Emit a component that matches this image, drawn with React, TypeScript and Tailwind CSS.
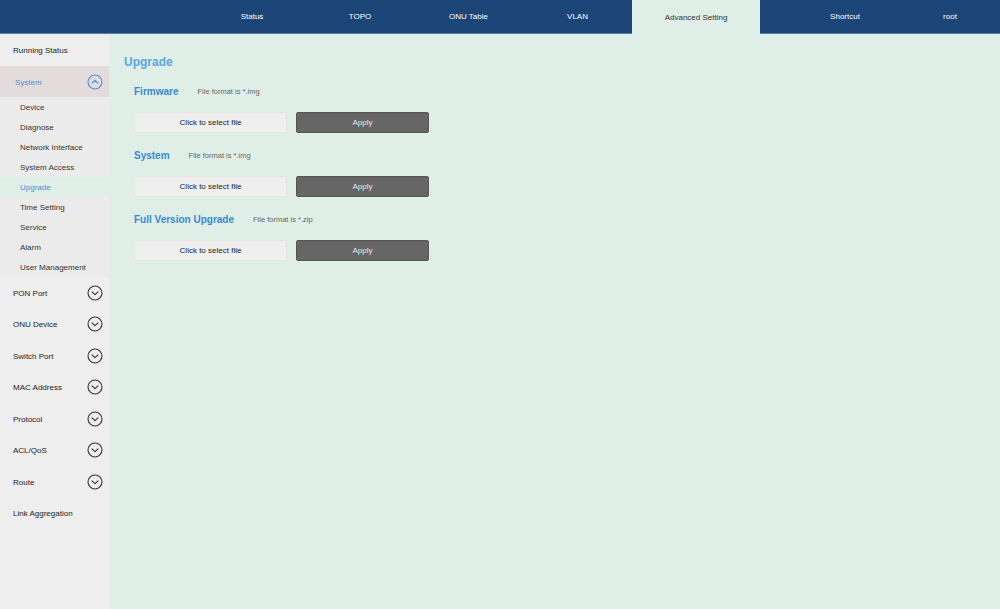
import React from 'react'

const navItems = [
  { label: 'Status', w: 'w-[108px]' },
  { label: 'TOPO', w: 'w-[108px]' },
  { label: 'ONU Table', w: 'w-[109px]' },
  { label: 'VLAN', w: 'w-[109px]' },
  { label: 'Advanced Setting', w: 'w-[128px]', active: true },
  { label: 'Shortcut', w: 'w-[170px]' },
  { label: 'root', w: 'w-[40px]' },
]

const systemItems = [
  'Device',
  'Diagnose',
  'Network Interface',
  'System Access',
  'Upgrade',
  'Time Setting',
  'Service',
  'Alarm',
  'User Management',
]

const groups = [
  { label: 'PON Port', arrow: true },
  { label: 'ONU Device', arrow: true },
  { label: 'Switch Port', arrow: true },
  { label: 'MAC Address', arrow: true },
  { label: 'Protocol', arrow: true },
  { label: 'ACL/QoS', arrow: true },
  { label: 'Route', arrow: true },
  { label: 'Link Aggregation', arrow: false },
]

const sections = [
  { title: 'Firmware', hint: 'File format is *.img' },
  { title: 'System', hint: 'File format is *.img' },
  { title: 'Full Version Upgrade', hint: 'File format is *.zip' },
]

const Chevron = ({ up, color }: { up?: boolean; color: string }) => (
  <svg width="16" height="16" viewBox="0 0 16 16" fill="none" stroke={color} strokeWidth="1.1">
    <circle cx="8" cy="8" r="7" />
    {up ? (
      <path d="M5 9.2 L8 6.3 L11 9.2" strokeLinecap="round" strokeLinejoin="round" />
    ) : (
      <path d="M5 6.8 L8 9.7 L11 6.8" strokeLinecap="round" strokeLinejoin="round" />
    )}
  </svg>
)

const App = () => {
  return (
    <div className="w-[1000px] h-[609px] flex flex-col bg-[#dfeee6] font-['Liberation_Sans',Arial,sans-serif] overflow-hidden">
      {/* top nav */}
      <div className="h-[34px] flex bg-[#1b4677]">
        <div className="w-[198px] border-b border-[#5a7fa8]"></div>
        {navItems.map(item => (
          <div
            key={item.label}
            className={
              item.active
                ? `${item.w} h-[34px] flex items-center justify-center pt-[1px] text-[8px] text-[#333] bg-[#dfeee6]`
                : `${item.w} h-[34px] flex items-center justify-center pt-[1px] text-[8px] text-white border-b border-[#5a7fa8]`
            }
          >
            {item.label}
          </div>
        ))}
        <div className="flex-1 border-b border-[#5a7fa8]"></div>
      </div>

      <div className="flex flex-1">
        {/* sidebar */}
        <div className="w-[109px] bg-[#eeeeee] flex flex-col text-[8px] text-[#222]">
          <div className="h-[32px] flex items-center pl-[13px] pt-[2px]">Running Status</div>
          <div className="h-[31px] flex items-center justify-between pl-[15px] pr-[6px] bg-[#e3dcdc] text-[#4a8fd6]">
            <span className="pt-[2px]">System</span>
            <Chevron up color="#4a8fd6" />
          </div>
          <div className="flex flex-col bg-[#ebebeb]">
            {systemItems.map(s => (
              <div
                key={s}
                className={
                  s === 'Upgrade'
                    ? 'h-[20px] flex items-center pl-[20px] pt-[2px] bg-[#dfeee6] text-[#4a8fd6]'
                    : 'h-[20px] flex items-center pl-[20px] pt-[2px] text-[#333]'
                }
              >
                {s}
              </div>
            ))}
          </div>
          {groups.map(g => (
            <div key={g.label} className="h-[31.5px] flex items-center justify-between pl-[13px] pr-[6px]">
              <span className="pt-[2px]">{g.label}</span>
              {g.arrow && <Chevron color="#333" />}
            </div>
          ))}
        </div>

        {/* content */}
        <div className="flex-1 pl-[15px] pt-[20px]">
          <h2 className="h-[16px] flex items-center text-[12px] font-bold text-[#5aa5e4]">Upgrade</h2>
          <div className="flex flex-col pl-[10px] pt-[14px] gap-[15px]">
            {sections.map(sec => (
              <div key={sec.title} className="flex flex-col gap-[14px]">
                <div className="h-[14px] flex items-center">
                  <span className="text-[10px] font-bold text-[#3a88d2]">{sec.title}</span>
                  <span className="ml-[19px] pt-[1px] text-[7.5px] text-[#666]">{sec.hint}</span>
                </div>
                <div className="flex gap-[9px]">
                  <div className="w-[153px] h-[21px] flex items-center justify-center pt-[1px] rounded-[2px] bg-[#efefef] border border-[#e4e4e4] text-[8px] text-[#222]">
                    Click to select file
                  </div>
                  <div className="w-[133px] h-[21px] flex items-center justify-center pt-[1px] rounded-[2px] bg-[#666666] border border-[#555] text-[8px] text-[#e8e8e8]">
                    Apply
                  </div>
                </div>
              </div>
            ))}
          </div>
        </div>
      </div>
    </div>
  )
}

export default App
